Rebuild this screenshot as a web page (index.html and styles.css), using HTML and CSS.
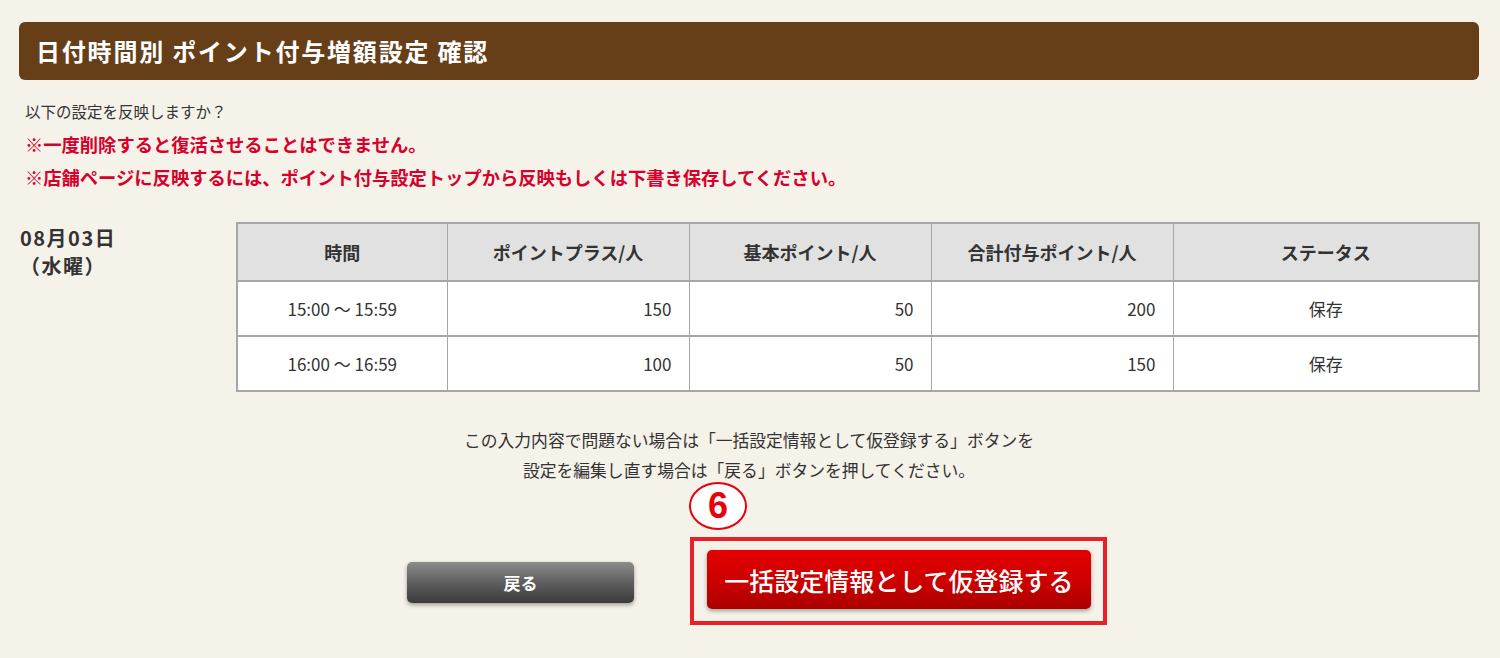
FILE: index.html
```html
<!DOCTYPE html>
<html lang="ja">
<head>
<meta charset="utf-8">
<title>日付時間別 ポイント付与増額設定 確認</title>
<link rel="stylesheet" href="styles.css">
</head>
<body>
<div class="page">
  <h1 class="title">日付時間別 ポイント付与増額設定 確認</h1>

  <div class="intro">
    <p class="ask">以下の設定を反映しますか？</p>
    <p class="warn">※一度削除すると復活させることはできません。</p>
    <p class="warn">※店舗ページに反映するには、ポイント付与設定トップから反映もしくは下書き保存してください。</p>
  </div>

  <div class="day">
    <div class="date">08月03日<br>（水曜）</div>
    <table class="grid">
      <colgroup>
        <col class="c-time"><col class="c-num"><col class="c-num"><col class="c-num"><col class="c-status">
      </colgroup>
      <thead>
        <tr><th>時間</th><th>ポイントプラス/人</th><th>基本ポイント/人</th><th>合計付与ポイント/人</th><th>ステータス</th></tr>
      </thead>
      <tbody>
        <tr><td class="center">15:00 ～ 15:59</td><td class="num">150</td><td class="num">50</td><td class="num">200</td><td class="center">保存</td></tr>
        <tr><td class="center">16:00 ～ 16:59</td><td class="num">100</td><td class="num">50</td><td class="num">150</td><td class="center">保存</td></tr>
      </tbody>
    </table>
  </div>

  <div class="note">
    <p>この入力内容で問題ない場合は「一括設定情報として仮登録する」ボタンを</p>
    <p>設定を編集し直す場合は「戻る」ボタンを押してください。</p>
  </div>

  <div class="actions">
    <button class="btn-back" type="button">戻る</button>
    <div class="highlight">
      <span class="marker">6</span>
      <button class="btn-submit" type="button">一括設定情報として仮登録する</button>
    </div>
  </div>
</div>
</body>
</html>
```

FILE: styles.css
```css
html, body {
  margin: 0;
  padding: 0;
}
body {
  background: #f5f2ea;
  color: #333333;
  font-family: "Noto Sans CJK JP", "Noto Sans", sans-serif;
  width: 1500px;
  height: 658px;
  overflow: hidden;
}
p { margin: 0; }

.page {
  padding: 22px 21px 0 19px;
}

.title {
  margin: 0;
  height: 58px;
  background: #663f19;
  border-radius: 6px;
  color: #ffffff;
  font-size: 24px;
  font-weight: bold;
  letter-spacing: 1.8px;
  line-height: 58px;
  padding-left: 17px;
}

.intro {
  margin-top: 15px;
  padding-left: 6px;
}
.intro p {
  line-height: 33px;
  height: 33px;
}
.ask {
  font-size: 15.5px;
  color: #333333;
}
.warn {
  font-size: 18.3px;
  font-weight: bold;
  color: #d7002a;
}

.day {
  margin-top: 28px;
  display: flex;
  align-items: flex-start;
}
.date {
  box-sizing: border-box;
  width: 217px;
  flex: none;
  padding-left: 1px;
  font-size: 20px;
  font-weight: bold;
  line-height: 28px;
  letter-spacing: 1.5px;
  color: #333333;
  margin-top: 2px;
}

.grid {
  width: 1242px;
  border-collapse: collapse;
  table-layout: fixed;
  border: 2px solid #a6a6a6;
  background: #ffffff;
}
.c-time { width: 210px; }
.c-num { width: 242px; }
.c-status { width: 306px; }

.grid th {
  background: #e1e1e1;
  font-size: 18px;
  font-weight: bold;
  color: #333333;
  height: 56px;
  border: 1px solid #a6a6a6;
  border-bottom: 2px solid #a6a6a6;
  padding: 0;
}
.grid td {
  font-size: 17px;
  color: #333333;
  height: 53px;
  border: 1px solid #a6a6a6;
  border-bottom: 2px solid #a6a6a6;
  padding: 0;
}
.grid td.center { text-align: center; }
.grid td.num {
  text-align: right;
  padding-right: 17px;
}

.note {
  margin-top: 33px;
  text-align: center;
  font-size: 16.8px;
  color: #333333;
}
.note p {
  line-height: 30px;
  height: 30px;
}

.actions {
  margin-top: 52px;
  display: flex;
  align-items: center;
  gap: 56px;
  padding-left: 388px;
}

.btn-back {
  width: 227px;
  height: 41px;
  border: none;
  border-radius: 5px;
  background: linear-gradient(to bottom, #8c8c8c 0%, #5e5e5e 50%, #3b3b3b 100%);
  box-shadow: 0 2px 4px rgba(0, 0, 0, 0.35);
  color: #ffffff;
  font-family: "Noto Sans CJK JP", sans-serif;
  font-size: 17px;
  font-weight: bold;
  margin-top: 3px;
  padding: 0;
}

.highlight {
  position: relative;
  width: 417px;
  height: 88px;
  box-sizing: border-box;
  border: 4px solid #e8202a;
  padding: 9px 12px 12px 13px;
}
.marker {
  position: absolute;
  left: -5px;
  top: -59px;
  width: 58px;
  height: 48px;
  box-sizing: border-box;
  border: 2px solid #e8000b;
  border-radius: 50%;
  background: #ffffff;
  color: #e8000b;
  font-family: "Liberation Sans", Arial, sans-serif;
  font-size: 36px;
  font-weight: bold;
  line-height: 44px;
  text-align: center;
}
.btn-submit {
  display: block;
  width: 384px;
  height: 59px;
  border: none;
  border-radius: 5px;
  background: linear-gradient(to bottom, #e40000 0%, #cc0000 55%, #a90000 100%);
  box-shadow: 0 2px 4px rgba(0, 0, 0, 0.35);
  color: #ffffff;
  font-family: "Noto Sans CJK JP", sans-serif;
  font-size: 25px;
  font-weight: 500;
  padding: 0;
}
```
